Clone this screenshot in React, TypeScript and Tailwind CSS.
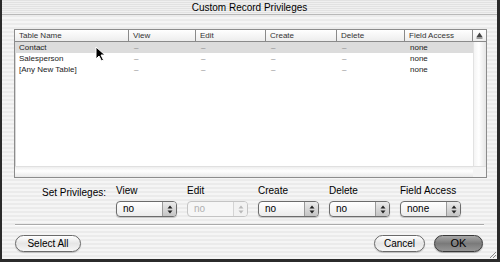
import React from 'react';

const font = { fontFamily: '"Liberation Sans", Arial, sans-serif' };

const columns = ['Table Name', 'View', 'Edit', 'Create', 'Delete', 'Field Access'];
const widths = ['w-[114px]', 'w-[67px]', 'w-[70px]', 'w-[71px]', 'w-[68px]', 'w-[68px]'];

const rows = [
  { name: 'Contact', access: 'none', selected: true },
  { name: 'Salesperson', access: 'none', selected: false },
  { name: '[Any New Table]', access: 'none', selected: false },
];

const Arrows = ({ disabled }: { disabled?: boolean }) => (
  <svg width="6" height="9" viewBox="0 0 6 9">
    <path d="M3 0.5 L5.5 3.5 L0.5 3.5 Z" fill={disabled ? '#b8b8b8' : '#222'} />
    <path d="M3 8.5 L5.5 5.5 L0.5 5.5 Z" fill={disabled ? '#b8b8b8' : '#222'} />
  </svg>
);

const Popup = ({ value, disabled, width = 'w-[61px]' }: { value: string; disabled?: boolean; width?: string }) => (
  <div
    className={`flex h-[16px] ${width} items-stretch overflow-hidden rounded-[4px] border ${
      disabled ? 'border-[#c4c4c4] bg-[#f6f6f6]' : 'border-[#6c6c6c] bg-[linear-gradient(#ffffff,#ececec)] shadow-[0_1px_1px_rgba(0,0,0,0.2)]'
    }`}
  >
    <span className={`flex-1 pl-[6px] text-[10px] leading-[14px] ${disabled ? 'text-[#b0b0b0]' : 'text-black'}`}>{value}</span>
    <span
      className={`flex w-[14px] items-center justify-center border-l ${
        disabled ? 'border-[#d4d4d4] bg-[#f2f2f2]' : 'border-[#9a9a9a] bg-[linear-gradient(#ebebeb,#c4c4c4)]'
      }`}
    >
      <Arrows disabled={disabled} />
    </span>
  </div>
);

const Button = ({ label, primary, width }: { label: string; primary?: boolean; width: string }) => (
  <button
    className={`flex h-[17px] ${width} items-center justify-center rounded-full border text-[10px] ${
      primary
        ? 'border-[#3a3a3a] bg-[linear-gradient(#a8a8a8,#7a7a7a_50%,#969696)] text-[11px] text-black shadow-[0_1px_1px_rgba(0,0,0,0.3)]'
        : 'border-[#6a6a6a] bg-[linear-gradient(#ffffff,#e6e6e6_50%,#f6f6f6)] text-black shadow-[0_1px_1px_rgba(0,0,0,0.2)]'
    }`}
  >
    {label}
  </button>
);

export default function App() {
  return (
    <div
      style={font}
      className="relative flex h-[262px] w-[500px] flex-col overflow-hidden border-b-[3px] border-l-2 border-r-[3px] border-[#2b2b2b] bg-[repeating-linear-gradient(0deg,#f5f5f5_0px,#f5f5f5_2px,#ebebeb_2px,#ebebeb_4px)]"
    >
      {/* title bar */}
      <div className="flex h-[15px] items-center justify-center border-b border-[#b8b8b8] bg-[repeating-linear-gradient(0deg,#f0f0f0_0px,#f0f0f0_1px,#e2e2e2_1px,#e2e2e2_2px)] text-[10px] text-black">
        Custom Record Privileges
      </div>

      <div className="flex flex-1 flex-col px-[12px] pt-[14px]">
        {/* table */}
        <div className="flex h-[149px] w-[473px] flex-col border border-[#8c8c8c] bg-white shadow-[inset_0_0_0_1px_#d8d8d8]">
          <div className="flex h-[12px] border-b border-[#8a8a8a] bg-[linear-gradient(#ffffff,#ededed)] text-[8px] leading-[11px] text-[#333]">
            {columns.map((c, i) => (
              <div key={c} className={`${widths[i]} border-r border-[#8a8a8a] pl-[4px]`}>
                {c}
              </div>
            ))}
            <div className="flex flex-1 items-center justify-center">
              <svg width="7" height="7" viewBox="0 0 7 7">
                <path d="M3.5 0.5 L6.5 5 L0.5 5 Z" fill="#444" />
                <rect x="0.5" y="5.5" width="6" height="1" fill="#444" />
              </svg>
            </div>
          </div>
          <div className="flex flex-1">
            <div className="flex w-[458px] flex-col">
              {rows.map((r) => (
                <div
                  key={r.name}
                  className={`flex h-[11px] text-[8px] leading-[11px] text-[#222] ${r.selected ? 'bg-[#dcdcdc]' : ''}`}
                >
                  <div className="w-[114px] pl-[4px]">{r.name}</div>
                  {[0, 1, 2, 3].map((k) => (
                    <div key={k} className={`${widths[k + 1]} pl-[5px] text-[#888]`}>
                      –
                    </div>
                  ))}
                  <div className="w-[68px] pl-[5px]">{r.access}</div>
                </div>
              ))}
            </div>
            <div className="flex-1 border-l border-[#e2e2e2] bg-[linear-gradient(90deg,#f4f4f4,#ffffff_40%,#e6e6e6)]" />
          </div>
          <div className="flex h-[11px] border-t border-[#e0e0e0]">
            <div className="w-[458px] bg-[linear-gradient(#eeeeee,#ffffff_40%,#e8e8e8)]" />
            <div className="flex-1 bg-[#f4f4f4]" />
          </div>
        </div>

        {/* set privileges */}
        <div className="mt-[7px] flex text-[10px] text-black">
          <div className="w-[98px] pr-[6px] text-right">Set Privileges:</div>
          <div className="flex gap-[10px] pl-[4px]">
            <div className="flex w-[61px] flex-col gap-[4px]">
              <span className="leading-[12px]">View</span>
              <Popup value="no" />
            </div>
            <div className="flex w-[61px] flex-col gap-[4px]">
              <span className="leading-[12px]">Edit</span>
              <Popup value="no" disabled />
            </div>
            <div className="flex w-[61px] flex-col gap-[4px]">
              <span className="leading-[12px]">Create</span>
              <Popup value="no" />
            </div>
            <div className="flex w-[61px] flex-col gap-[4px]">
              <span className="leading-[12px]">Delete</span>
              <Popup value="no" />
            </div>
            <div className="flex w-[61px] flex-col gap-[4px]">
              <span className="leading-[12px]">Field Access</span>
              <Popup value="none" />
            </div>
          </div>
        </div>

        <div className="mx-[1px] mt-[7px] h-[2px] border-t border-b border-t-[#aaaaaa] border-b-white" />

        <div className="mt-[9px] flex items-center pl-[1px] pr-[2px]">
          <Button label="Select All" width="w-[66px]" />
          <div className="flex-1" />
          <Button label="Cancel" width="w-[51px]" />
          <div className="w-[9px]" />
          <Button label="OK" width="w-[49px]" primary />
        </div>
      </div>

      {/* mouse cursor */}
      <svg className="absolute left-[93px] top-[46px]" width="12" height="16" viewBox="0 0 12 16">
        <path d="M1 1 L1 13 L4 10 L6.5 15 L8.5 14 L6 9 L10 9 Z" fill="#000" stroke="#fff" strokeWidth="1" />
      </svg>

      {/* resize grip */}
      <svg className="absolute bottom-0 right-0" width="9" height="9" viewBox="0 0 9 9">
        <path d="M8 2 L2 8 M8 5 L5 8" stroke="#888" strokeWidth="1" />
      </svg>
    </div>
  );
}
